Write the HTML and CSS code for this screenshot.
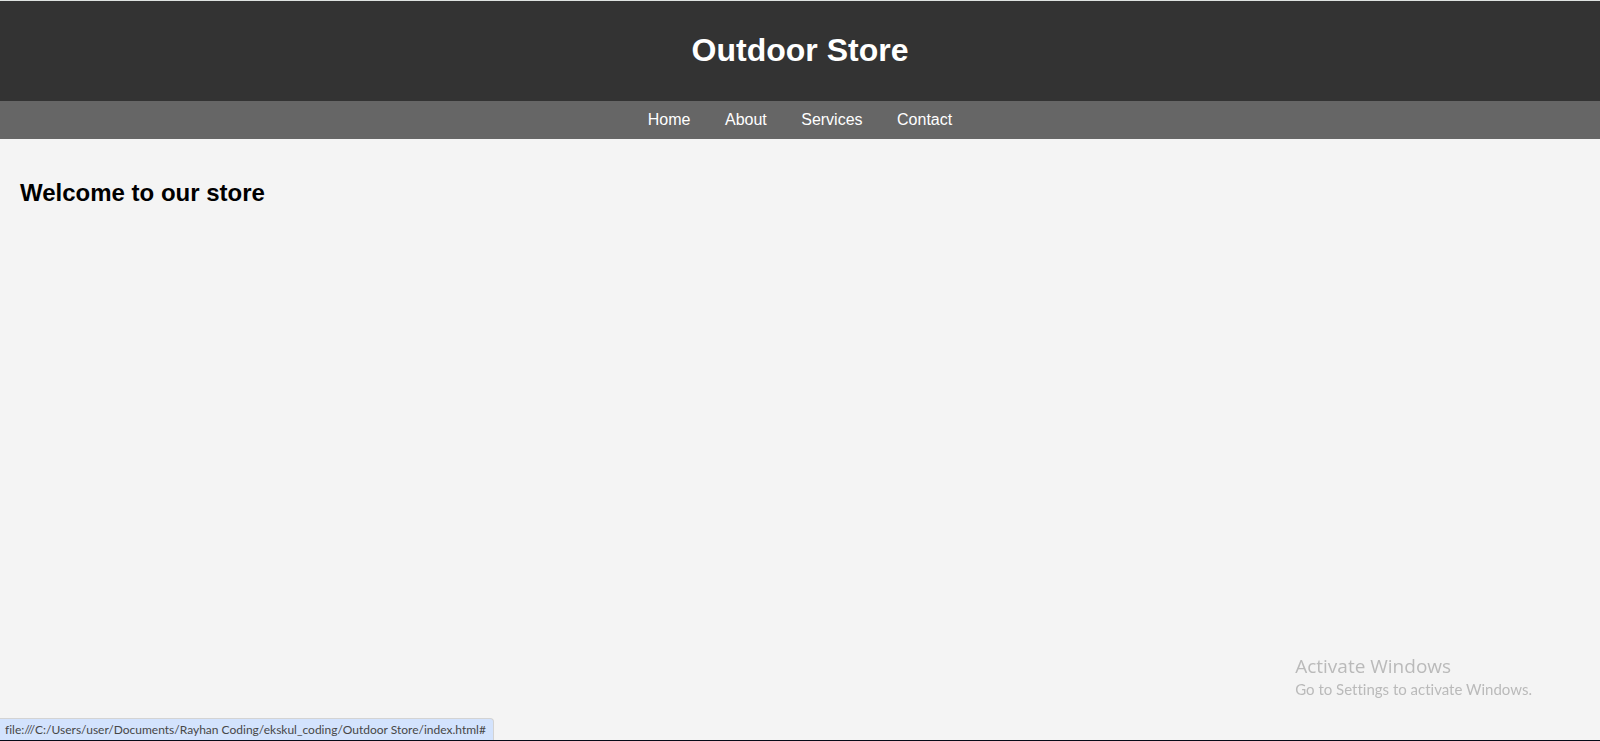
FILE: index.html
```html
<!DOCTYPE html>
<html lang="en">
<head>
<meta charset="utf-8">
<title>Outdoor Store</title>
<link rel="stylesheet" href="styles.css">
</head>
<body>
<header class="site-header"><h1>Outdoor Store</h1></header>
<nav class="site-nav">
<a href="#">Home</a>
<a href="#">About</a>
<a href="#">Services</a>
<a href="#">Contact</a>
</nav>
<main class="content"><h2>Welcome to our store</h2></main>
<aside class="activation">
<p class="activation-title">Activate Windows</p>
<p class="activation-text">Go to Settings to activate Windows.</p>
</aside>
<div class="status">file:///C:/Users/user/Documents/Rayhan Coding/ekskul_coding/Outdoor Store/index.html#</div>
</body>
</html>
```
FILE: styles.css
```css
body {
  margin: 0;
  min-height: 100vh;
  box-sizing: border-box;
  border-top: 1px solid #dfe3e1;
  border-bottom: 1px solid #060a18;
  background: #f4f4f4;
  color: #000;
  font-family: "Liberation Sans", Arial, sans-serif;
  font-size: 16px;
}
.site-header {
  padding: 10px 0;
  background: #333;
  color: #fff;
  text-align: center;
}
.site-header h1 {
  margin: 20px 0 22px;
  font-size: 32px;
  line-height: 38px;
}
.site-nav {
  padding: 10px;
  background: #666;
  text-align: center;
  line-height: 18px;
}
.site-nav a {
  margin: 0 15px;
  color: #fff;
  text-decoration: none;
}
.content {
  padding: 20px;
}
.content h2 {
  margin: 20px 0;
  font-size: 24px;
  line-height: 27px;
}
.activation {
  position: fixed;
  right: 68px;
  bottom: 42px;
  color: #bababa;
  font-family: Lato, sans-serif;
  font-variant-ligatures: none;
}
.activation p {
  margin: 0;
}
.activation-title {
  font-family: "Open Sans", sans-serif;
  font-size: 19px;
  line-height: 25px;
}
.activation-text {
  font-size: 15px;
  line-height: 20px;
}
.status {
  position: fixed;
  left: 0;
  bottom: 1px;
  padding: 1px 7px 0 5px;
  border-top: 1px solid #d3d3d3;
  border-right: 1px solid #d3d3d3;
  border-radius: 0 4px 0 0;
  background: #d3e3fd;
  color: #474747;
  font-family: Lato, sans-serif;
  font-variant-ligatures: none;
  font-size: 12px;
  line-height: 20px;
}
```
